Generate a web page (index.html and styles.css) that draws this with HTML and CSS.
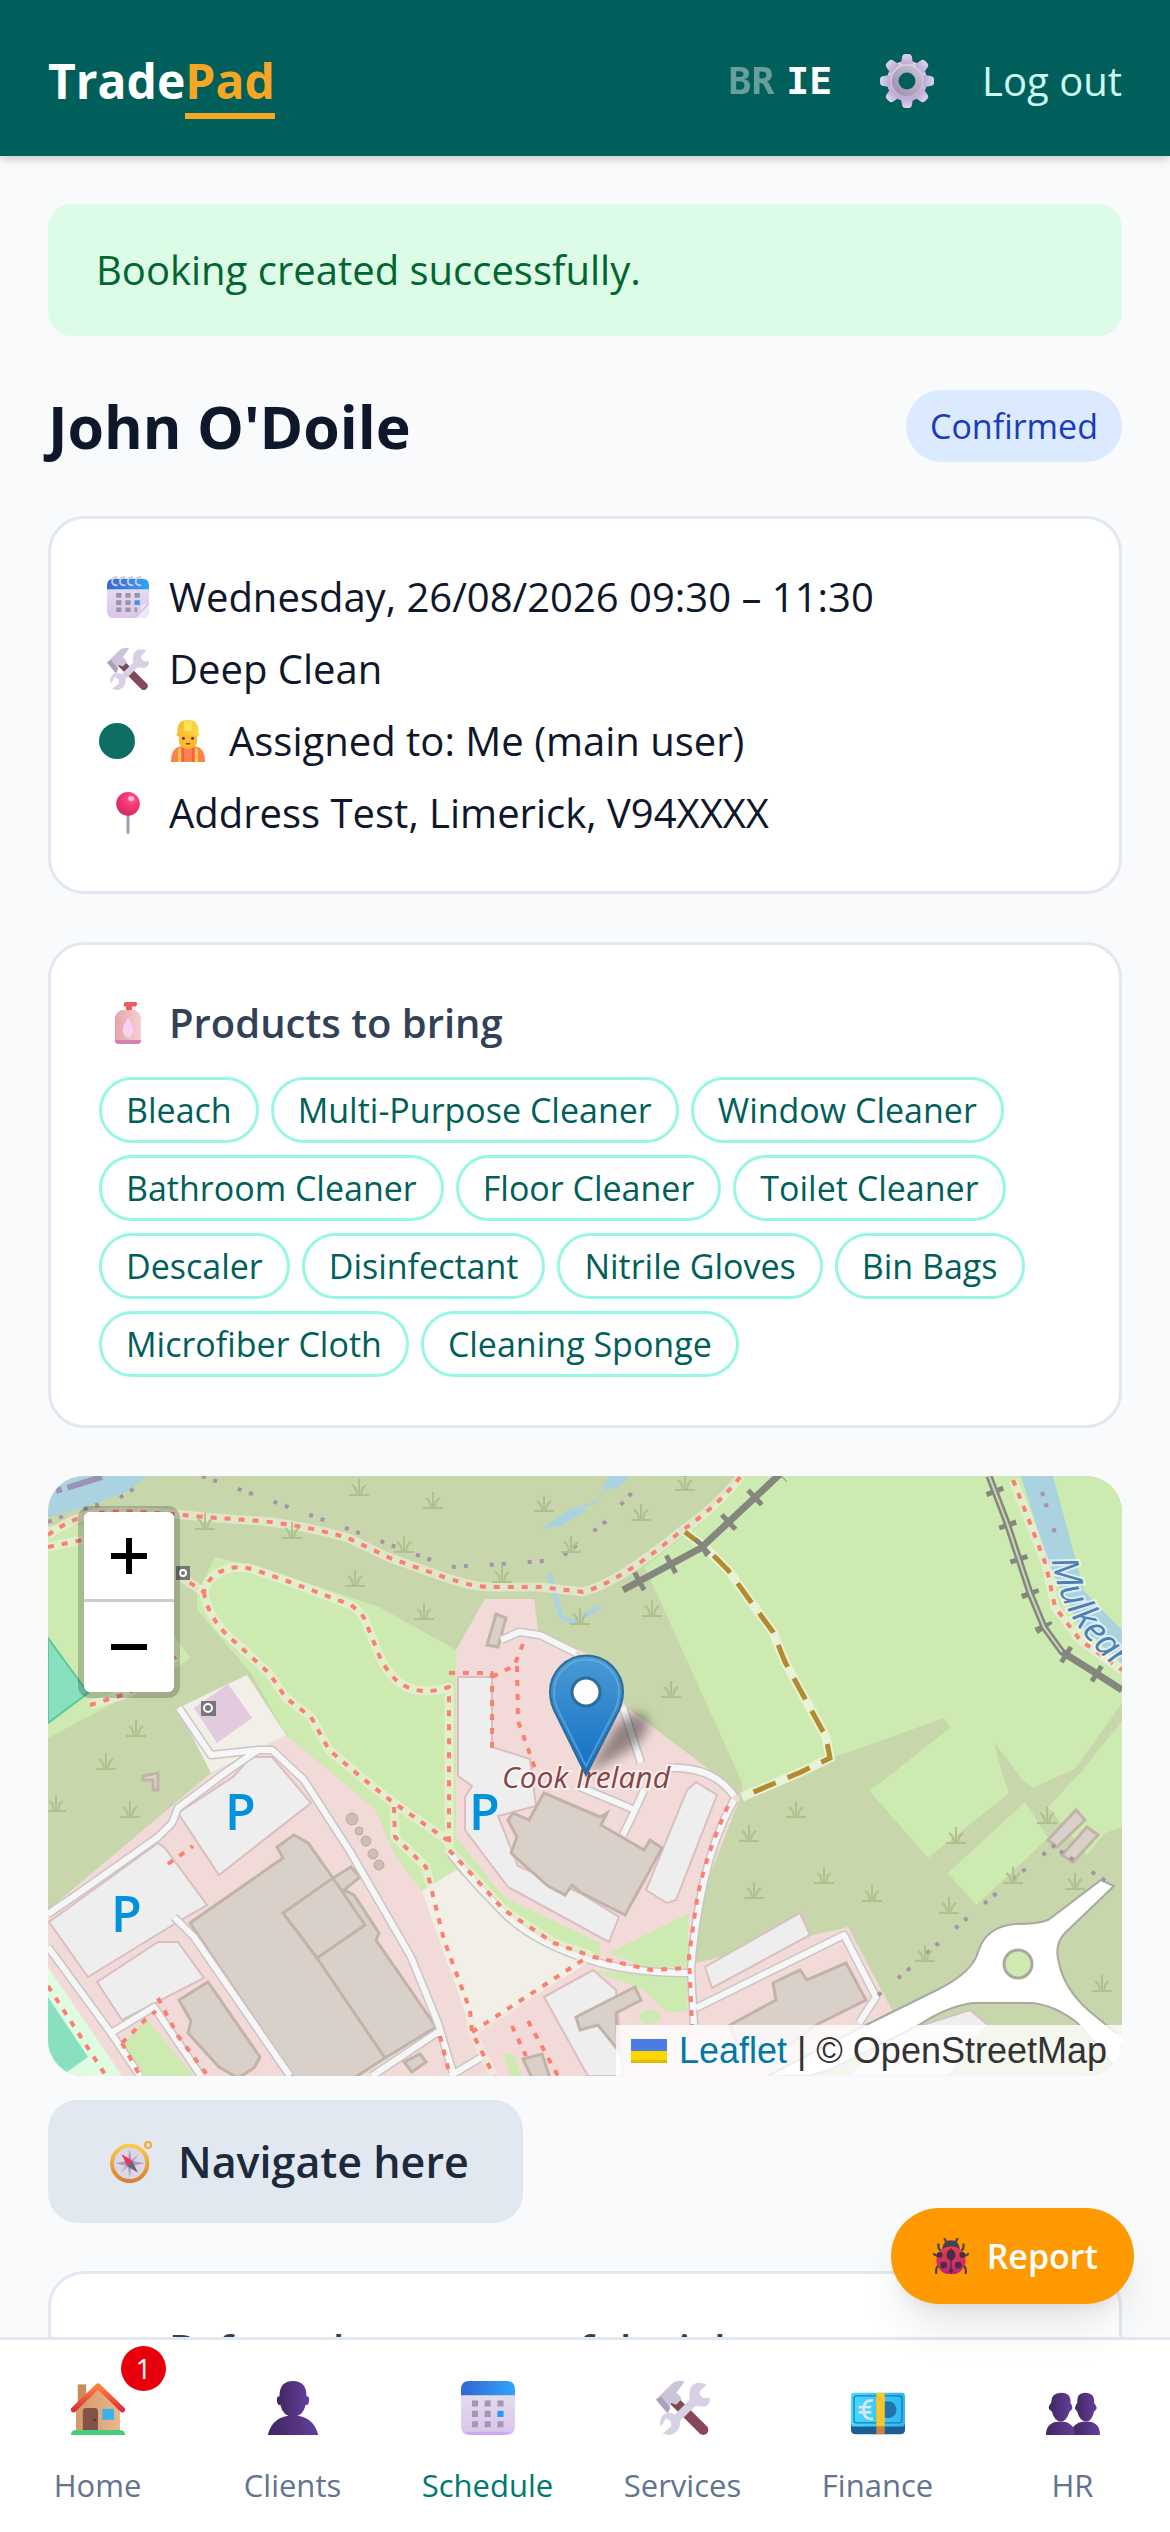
FILE: index.html
```html
<!DOCTYPE html>
<html lang="en">
<head>
    <meta charset="UTF-8">
    <meta name="viewport" content="width=device-width, initial-scale=1.0">
    <title>TradePad</title>
    <link rel="stylesheet" href="styles.css">
</head>
<body>

    <!-- Icon sprite -->
    <svg class="sprite" aria-hidden="true">
        <defs>
            <linearGradient id="gSilver" x1="0" y1="0" x2="0" y2="1"><stop offset="0" stop-color="#ddd5ea"/><stop offset="1" stop-color="#bda9d6"/></linearGradient>
            <linearGradient id="gRing" x1="1" y1="0" x2="0" y2="1"><stop offset="0" stop-color="#c6bdd0"/><stop offset="1" stop-color="#9f95ac"/></linearGradient>
            <linearGradient id="gBlue" x1="0" y1="0" x2="1" y2="0"><stop offset="0" stop-color="#3565d6"/><stop offset="1" stop-color="#32a2fb"/></linearGradient>
            <linearGradient id="gPage" x1="0" y1="0" x2="0" y2="1"><stop offset="0" stop-color="#e4dcf0"/><stop offset="1" stop-color="#d9c5ea"/></linearGradient>
            <linearGradient id="gWood" x1="0" y1="0" x2="1" y2="1"><stop offset="0" stop-color="#7b4b4b"/><stop offset="1" stop-color="#8a4560"/></linearGradient>
            <linearGradient id="gPerson" x1="0" y1="0" x2="1" y2="0"><stop offset="0" stop-color="#40265f"/><stop offset="1" stop-color="#643f9c"/></linearGradient>
            <linearGradient id="gHat" x1="0" y1="0" x2="1" y2="0"><stop offset="0" stop-color="#f5b82e"/><stop offset="1" stop-color="#fedb45"/></linearGradient>
            <radialGradient id="gPin" cx=".65" cy=".3" r=".8"><stop offset="0" stop-color="#ff5c8a"/><stop offset=".4" stop-color="#f73572"/><stop offset="1" stop-color="#c72c62"/></radialGradient>
            <linearGradient id="gBottle" x1="0" y1="0" x2="1" y2="0"><stop offset="0" stop-color="#e7a3a9"/><stop offset="1" stop-color="#f6d0d4"/></linearGradient>
            <linearGradient id="gWall" x1="0" y1="0" x2="1" y2="0"><stop offset="0" stop-color="#d59769"/><stop offset="1" stop-color="#e9b88d"/></linearGradient>
            <linearGradient id="gRoof" x1="0" y1="0" x2="0" y2="1"><stop offset="0" stop-color="#ff8140"/><stop offset="1" stop-color="#dc3039"/></linearGradient>
            <linearGradient id="gNote" x1="0" y1="0" x2="1" y2="0"><stop offset="0" stop-color="#47dbff"/><stop offset="1" stop-color="#2eb8f0"/></linearGradient>
            <linearGradient id="gBug" x1="0" y1="0" x2="0" y2="1"><stop offset="0" stop-color="#e8414f"/><stop offset="1" stop-color="#bd2276"/></linearGradient>
            <linearGradient id="gGold" x1="0" y1="0" x2="0" y2="1"><stop offset="0" stop-color="#fbcb42"/><stop offset="1" stop-color="#d8812f"/></linearGradient>
            <linearGradient id="gMarker" x1="0" y1="0" x2="0" y2="1"><stop offset="0" stop-color="#4a9bd3"/><stop offset="1" stop-color="#126fc6"/></linearGradient>
            <filter id="soft" x="-50%" y="-50%" width="200%" height="200%"><feGaussianBlur stdDeviation="6"/></filter>
        </defs>

        <symbol id="gear" viewBox="0 0 32 32">
            <g fill="url(#gSilver)">
                <circle cx="16" cy="16" r="12"/>
                <path id="tooth" d="M12.3 6 L13.2 1.4 Q13.5 0 15 0 H17 Q18.5 0 18.8 1.4 L19.7 6Z"/>
                <use href="#tooth" transform="rotate(45 16 16)"/><use href="#tooth" transform="rotate(90 16 16)"/>
                <use href="#tooth" transform="rotate(135 16 16)"/><use href="#tooth" transform="rotate(180 16 16)"/>
                <use href="#tooth" transform="rotate(225 16 16)"/><use href="#tooth" transform="rotate(270 16 16)"/>
                <use href="#tooth" transform="rotate(315 16 16)"/>
            </g>
            <circle cx="16" cy="16" r="7" fill="#005f5a" stroke="url(#gRing)" stroke-width="4"/>
        </symbol>

        <symbol id="spiral-calendar" viewBox="0 0 32 32">
            <path d="M0 9H32V27Q32 32 27 32H5Q0 32 0 27Z" fill="url(#gPage)"/>
            <path d="M0 10V7Q0 2 5 2H27Q32 2 32 7V10Z" fill="url(#gBlue)"/>
            <g fill="#9a93a6"><path d="M7 13h4v3.500h-4zM14 13h4v3.500h-4zM21 13h4v3.500h-4zM7 18.500h4v3.500h-4zM14 18.500h4v3.500h-4zM7 24h4v3.500h-4zM14 24h4v3.500h-4zM21 24h2v3.500h-2z"/></g>
            <path d="M21 18.500h4v3.500h-4z" fill="#3b8fe8"/>
            <path d="M32 21Q26 21 26 24Q26 27 21 32H27Q32 32 32 27Z" fill="#efe8f6"/><path d="M32 21L21 32" stroke="#cdbbe0" fill="none"/>
            <g fill="none" stroke="#cfc8d8" stroke-width="1.500"><path d="M8 7C2 8 3 0 8 1M14 7C8 8 9 0 14 1M20 7C14 8 15 0 20 1M26 7C20 8 21 0 26 1"/></g>
        </symbol>

        <symbol id="tools" viewBox="0 0 32 32">
            <path d="M11 12L28 29" stroke="url(#gWood)" stroke-width="6" stroke-linecap="round"/>
            <path d="M0 11L9 2Q11 0 13 0H16.500V1L12 7Q15 9 15 11L12 14L9 13L7 19L5.500 18Z" fill="#cbc3da"/>
            <path d="M0 11L7 19L8.500 16L3 9Z" fill="#aaa1b9"/>
            <path d="M30 2L26 6V8L28 10H32Q32 16 26 15Q24 14 22 16L14 24Q15 28 11 31Q8 33 4 31L9 27V24L6 22L3 27Q1 22 6 19Q8 18 11 20L20 11Q19 5 22 2Q25 0 30 2Z" fill="#d8d0e5"/>
        </symbol>

        <symbol id="worker" viewBox="0 0 32 32">
            <path d="M3 32Q3 20 12 20H20Q29 20 29 32Z" fill="#fb8150"/>
            <path d="M8.500 32V22l2.500-1V32zM23.500 32V22l-2.500-1V32z" fill="#fdd03b"/><path d="M11 21l2 0 0 11h-2zM19 21h2v11h-2z" fill="#fc5a50"/>
            <path d="M9 9H23V15Q23 22 16 22Q9 22 9 15Z" fill="#fdbb2d"/>
            <path d="M8 10Q7 0 16 0Q25 0 24 10L25 11Q24 13 22 12Q16 11 10 12Q8 13 7 11Z" fill="url(#gHat)"/>
            <path d="M13 .5h6v8h-6z" fill="#fde158"/>
            <circle cx="12.500" cy="14" r="1.100" fill="#4a2c2a"/><circle cx="19.500" cy="14" r="1.100" fill="#4a2c2a"/>
            <path d="M14 18q2-1 4 0q-2 1.500-4 0" fill="#6b2c2c"/>
        </symbol>

        <symbol id="pin" viewBox="0 0 32 32">
            <path d="M14.800 16h2.400v15q-1.200 2-2.400 0z" fill="#a99fb5"/>
            <circle cx="16" cy="9" r="9" fill="url(#gPin)"/><ellipse cx="18.500" cy="5" rx="2.300" ry="2" fill="#ffbcd0"/>
        </symbol>

        <symbol id="lotion" viewBox="0 0 32 32">
            <path d="M14 0H22Q24 1 22 3.500H19V6H14.500V3.500H13Q12 1 14 0Z" fill="#ef5a64"/>
            <path d="M11 6H21Q26 8 26 13V29Q26 32 23 32H9Q6 32 6 29V13Q6 8 11 6Z" fill="url(#gBottle)"/>
            <path d="M6 29H26Q26 32 23 32H9Q6 32 6 29Z" fill="#d580af"/>
            <path d="M16 12Q20 18 20 22.500Q19 27 16 27Q13 27 12 22.500Q12 18 16 12Z" fill="#f7d3f2"/>
        </symbol>

        <symbol id="compass" viewBox="0 0 32 32">
            <circle cx="29" cy="3" r="2.300" fill="none" stroke="#f3ad35" stroke-width="1.600"/>
            <circle cx="15" cy="17" r="13.500" fill="#ddd5e8" stroke="url(#gGold)" stroke-width="3"/>
            <path d="M15 6L16.500 15L26 17L16.500 19L15 28L13.500 19L4 17L13.500 15Z" fill="#a9a0b8"/>
            <path d="M8 10L15 15L22 10L17 17L22 24L15 19L8 24L13 17Z" fill="#b7afc4"/>
            <path d="M9 10L17 15L13 19Z" fill="#f0325a"/><path d="M21 24L17 15L13 19Z" fill="#6b6178"/>
        </symbol>

        <symbol id="ladybug" viewBox="0 0 32 32">
            <path d="M12 4L10 0M20 4L22 0M8 12Q4 10 5 5M24 12Q28 10 27 5M6 17L0 14M26 17L32 14M6 23Q2 26 3 32M26 23Q30 26 29 32" fill="none" stroke="#4c4252" stroke-width="2"/>
            <path d="M8 10Q9 2 16 2Q23 2 24 10Z" fill="#4b4054"/>
            <ellipse cx="16" cy="20" rx="13" ry="12.500" fill="url(#gBug)"/>
            <g fill="#4a2d42"><path d="M15.500 9h1v23h-1z"/><ellipse cx="16" cy="15" rx="4" ry="5"/><circle cx="6" cy="15" r="2.600"/><circle cx="26" cy="15" r="2.600"/><circle cx="9.500" cy="24" r="3"/><circle cx="22.500" cy="24" r="3"/><circle cx="16" cy="29" r="1.800"/></g>
        </symbol>

        <symbol id="house" viewBox="0 0 32 32">
            <path d="M4 2h5v12H4z" fill="#c78d5b"/>
            <path d="M3 16L16 4L29 16V30H3Z" fill="url(#gWall)"/>
            <path d="M1.500 17L16 3L30.500 17" fill="none" stroke="url(#gRoof)" stroke-width="3.200" stroke-linecap="round" stroke-linejoin="round"/>
            <path d="M7 30V18Q7 16 9 16H14Q16 16 16 18V30Z" fill="#835349"/><circle cx="14" cy="23" r=".9" fill="#5d3936"/>
            <path d="M18.500 16.500h7v6.500h-7z" fill="#38b3ee"/>
            <path d="M0 32Q0 29 3 29H29Q32 29 32 32Z" fill="#46cf7b"/>
        </symbol>

        <symbol id="bust" viewBox="0 0 32 32">
            <path d="M8 9Q8 0 16 0Q24 0 24 9Q26 9 25.500 12Q25 15 23.500 14Q22 21 16 21Q10 21 8.500 14Q7 15 6.500 12Q6 9 8 9Z" fill="url(#gPerson)"/>
            <path d="M1 32Q4 20.500 16 20.500Q28 20.500 31 32Z" fill="url(#gPerson)"/>
        </symbol>

        <symbol id="calendar" viewBox="0 0 32 32">
            <path d="M0 8H32V27Q32 32 27 32H5Q0 32 0 27Z" fill="url(#gPage)"/>
            <path d="M2 30Q4 32 7 32H25Q28 32 30 30Z" fill="#cfa8f0"/>
            <path d="M0 8.500V5Q0 0 5 0H27Q32 0 32 5V8.500Z" fill="url(#gBlue)"/>
            <path d="M6.500 11.500h3.600v3.600h-3.600zM14 11.500h3.600v3.600h-3.600zM21.600 11.500h3.600v3.600h-3.600zM6.500 17.700h3.600v3.600h-3.600zM14 17.700h3.600v3.600h-3.600zM6.500 23.800h3.600v3.600h-3.600zM14 23.800h3.600v3.600h-3.600zM21.600 23.800h3.600v3.600h-3.600z" fill="#a596b3"/>
            <path d="M21.600 17.700h3.600v3.600h-3.600z" fill="#2b95f8"/>
        </symbol>

        <symbol id="banknote" viewBox="0 0 32 32">
            <path d="M0 21H32V29Q32 31.500 29 31.500H3Q0 31.500 0 29Z" fill="#1b5f94"/>
            <rect y="7" width="32" height="20" rx="2" fill="url(#gNote)"/>
            <rect x="1.800" y="8.800" width="28.400" height="16" rx="1.500" fill="none" stroke="#1e79b5" stroke-width=".8"/>
            <circle cx="22" cy="17" r="5" fill="#2273ae"/>
            <path d="M13 11.500Q7.500 11 7.500 17Q7.500 23 13 22.500M4.500 15.500H12M4.500 18.500H12" fill="none" stroke="#d5e8ee" stroke-width="1.700"/>
            <path d="M15 7h5v20h-5z" fill="#ffc526"/><path d="M15 27h5v4.500h-5z" fill="#cf8242"/>
        </symbol>

        <symbol id="busts" viewBox="0 0 32 32">
            <g fill="url(#gPerson)">
                <path d="M18.500 13Q18 7 23 7Q29 7 28.500 13Q31.500 16 28.500 18Q27 24 24 24Q20 24 18.500 18Q16 16 18.500 13Z"/><path d="M15 32Q15 24 24 24Q32 24 32 32Z"/>
                <path d="M3 13Q3 7 9 7Q15 7 14.500 13Q17 16 14 18Q12 24 9 24Q5 24 3.500 18Q0 16 3 13Z"/><path d="M0 32Q0 24 8.500 24Q17 24 17 32Z"/>
            </g>
        </symbol>

        <symbol id="camera" viewBox="0 0 32 32">
            <path d="M2 13H30V30H2Z" fill="#5d5468"/><circle cx="16" cy="21" r="6" fill="#a9d3f5"/>
        </symbol>

        <symbol id="tuft" viewBox="-12 -20 24 22" overflow="visible">
            <path d="M-10 0H10M0 0V-16M-2 -1Q-3 -8 -7 -10M2 -1Q3 -8 7 -10" fill="none" stroke="#b1c18e" stroke-width="2"/>
        </symbol>
    </svg>

    <div class="app">
        <!-- Top bar -->
        <header class="topbar">
            <a class="logo" href="#">Trade<span>Pad</span></a>
            <div class="topbar-actions">
                <div class="langs">
                    <a class="lang" href="#">BR</a>
                    <a class="lang active" href="#">IE</a>
                </div>
                <a class="settings" href="#" aria-label="Settings"><svg class="icon-lg"><use href="#gear"/></svg></a>
                <button class="logout" type="button">Log out</button>
            </div>
        </header>

        <main class="content">
            <div class="alert" role="status">Booking created successfully.</div>

            <div class="title-row">
                <h1>John O'Doile</h1>
                <span class="status">Confirmed</span>
            </div>

            <!-- Booking details -->
            <section class="card details">
                <div class="row"><svg class="icon"><use href="#spiral-calendar"/></svg><span>Wednesday, 26/08/2026 09:30 – 11:30</span></div>
                <div class="row"><svg class="icon"><use href="#tools"/></svg><span>Deep Clean</span></div>
                <div class="row assigned"><span class="dot"></span><div class="row"><svg class="icon"><use href="#worker"/></svg><span>Assigned to: Me (main user)</span></div></div>
                <div class="row"><svg class="icon"><use href="#pin"/></svg><span>Address Test, Limerick, V94XXXX</span></div>
            </section>

            <!-- Products -->
            <section class="card">
                <h2 class="row"><svg class="icon"><use href="#lotion"/></svg><span>Products to bring</span></h2>
                <ul class="tags">
                    <li>Bleach</li>
                    <li>Multi-Purpose Cleaner</li>
                    <li>Window Cleaner</li>
                    <li>Bathroom Cleaner</li>
                    <li>Floor Cleaner</li>
                    <li>Toilet Cleaner</li>
                    <li>Descaler</li>
                    <li>Disinfectant</li>
                    <li>Nitrile Gloves</li>
                    <li>Bin Bags</li>
                    <li>Microfiber Cloth</li>
                    <li>Cleaning Sponge</li>
                </ul>
            </section>

            <!-- Map -->
            <div class="map">
                <svg class="map-canvas" viewBox="0 0 1074 600" preserveAspectRatio="xMidYMid slice">
                    <rect width="1074" height="600" fill="#c8d7ab"/>

                    <!-- grass -->
                    <g fill="#cdebb0">
                        <path d="M694 0L636 60L596 91L605 109L693 304L696 322L753 298L784 282L896 242L903 251L836 304L821 314L880 382L961 317L953 294L946 266L975 304L985 312L1028 292L1074 227V0Z"/>
                        <path d="M977 326L1000 362L928 429L900 397Z"/>
                        <path d="M1074 245L1032 297L1000 331L1039 379L1057 357L1074 351Z"/>
                        <path d="M0 50L60 48L110 70L120 150L142 182L110 205L60 230L0 262Z"/>
                    </g>
                    <path d="M0 162L40 217L0 247Z" fill="#88e0be" stroke="#5cc79c" stroke-width="2"/>

                    <!-- built-up area -->
                    <path d="M238 259L163 297L0 434V600H740L844 534L800 451L648 487L650 430L692 322L675 304L578 231L552 184L490 154L486 123H437L408 174V394L374 415L346 377L328 334L281 294Z" fill="#f2dad9"/>
                    <path d="M167 81L221 94L331 131L408 174V361L456 421L552 467V486L510 474L456 437L410 394L374 415L346 377L328 334L281 294L238 259L203 197L149 134V117Z" fill="#cdebb0"/>
                    <path d="M130 232L199 199L238 259L163 297Z" fill="#f2efe9"/>
                    <path d="M146 232L180 208L204 242L169 267Z" fill="#e2cbde"/>
                    <path d="M374 415L408 394L456 437L510 474L545 484L424 556Z" fill="#f2efe9"/>
                    <path d="M0 491L74 600H0Z" fill="#dffce2"/>
                    <path d="M0 521L40 581L19 596L0 590Z" fill="#88e0be"/>
                    <g fill="#cdebb0">
                        <path d="M74 567L99 544L146 600H92Z"/>
                        <path d="M561 477L641 437L639 491L596 491Z"/>
                        <path d="M543 494L639 501V536H619L596 514Z"/>
                        <ellipse cx="602" cy="541" rx="11" ry="7"/>
                        <path d="M455 578L466 578L474 600H463Z"/>
                    </g>

                    <!-- water -->
                    <g fill="#aad3df">
                        <path d="M0 0H99L78 16L38 31L0 41Z"/>
                        <path d="M973 0H1005L1027 81L1036 115L1074 154V187L1032 151L1007 101L998 81Z"/>
                        <path d="M560 0H582L570 12L556 14L550 26L532 34H540L512 50L492 54L520 34L550 24Z"/>
                    </g>
                    <path d="M501 97L513 141L524 146L552 131" fill="none" stroke="#aad3df" stroke-width="5"/>
                    <path d="M8 15L54 1" stroke="#9c92b5" stroke-width="6" stroke-dasharray="6 6 50"/>

                    <!-- car parks -->
                    <g fill="#eeeeee" stroke="#d9bfc0" stroke-width="2">
                        <path d="M130 337L185 301L203 281H224L263 327L171 399Z"/>
                        <path d="M1 446L110 367L117 372L159 429L128 447L40 501Z"/>
                        <path d="M49 506L110 466H130L156 502L74 544Z"/>
                        <path d="M410 201H444V271L482 283L488 330L450 340L470 390L532 417L571 441L561 466L460 411L417 354V321L424 310L410 300Z"/>
                        <path d="M648 306L669 319L628 424L619 427L598 414L639 314Z"/>
                        <path d="M657 491L752 437L762 459L664 512Z"/>
                        <path d="M496 521L545 494L568 514L575 600H540Z"/>
                        <path d="M840 560L922 534L940 549L900 600H800Z"/>
                    </g>

                    <!-- buildings -->
                    <g fill="#d9d0c9" stroke="#c2b3a8" stroke-width="3">
                        <path d="M496 317L552 341L559 337L553 349L596 374L602 364L614 372L577 439L532 416L524 409L517 419L500 410L463 377L469 361L460 344L465 337L481 344Z"/>
                        <path d="M246 359L260 367L285 402L303 391L312 401L296 414L306 419L331 457L328 464L388 551L337 582L306 602H246L142 447L235 382L229 371Z"/>
                        <path d="M285 402L235 437L269 482L317 449ZM269 482L337 582" fill="none"/>
                        <path d="M131 524L160 506L212 581L206 592L190 602L171 591L140 557L143 545Z"/>
                        <path d="M528 541L587 511L593 524L568 537L570 574L550 549L532 554Z"/>
                        <path d="M682 549L728 524L725 507L752 494L759 504L798 487L818 524L768 549L740 570H690Z"/>
                        <path d="M475 583L494 578L502 602H484ZM356 586L372 578L378 586L364 596Z"/>
                        <path d="M1028 334L1037 344L1009 371L1000 364ZM1039 351L1050 359L1025 386L1014 379ZM448 138L458 142L450 171L439 169ZM95 300L110 297V314H105V304H95Z"/>
                    </g>
                    <g fill="#cdbdb2" stroke="#bcaaa0">
                        <circle cx="304" cy="343" r="6"/><circle cx="311" cy="355" r="4"/><circle cx="318" cy="365" r="5"/><circle cx="325" cy="378" r="5"/><circle cx="331" cy="389" r="5"/>
                    </g>

                    <!-- roads: casing, then fill -->
                    <g fill="none" stroke-linejoin="round">
                        <path id="roads" stroke="#c9c5c5" stroke-width="9" d="M0 438L28 419L110 361L124 347L130 332L178 296L210 274H224L256 304L303 377L363 481L390 547L406 600M131 232L163 279L210 274M0 471L63 557L92 600M126 441L146 461L242 600M63 557L106 531L153 600M390 556L324 600M402 600L434 581M402 377Q424 405 456 437T552 487Q590 497 643 497M686 324Q666 360 656 405T643 494L646 549M453 164L471 156L492 159L528 177M575 231L593 287M621 292Q665 290 686 320M532 311L587 334L596 314M587 334L575 359M648 532L796 459L828 521L811 547"/>
                        <path stroke="#f7f6f6" stroke-width="6" d="M0 438L28 419L110 361L124 347L130 332L178 296L210 274H224L256 304L303 377L363 481L390 547L406 600M131 232L163 279L210 274M0 471L63 557L92 600M126 441L146 461L242 600M63 557L106 531L153 600M390 556L324 600M402 600L434 581M402 377Q424 405 456 437T552 487Q590 497 643 497M686 324Q666 360 656 405T643 494L646 549M453 164L471 156L492 159L528 177M575 231L593 287M621 292Q665 290 686 320M532 311L587 334L596 314M587 334L575 359M648 532L796 459L828 521L811 547"/>
                    </g>

                    <!-- roundabout -->
                    <path d="M720 600L818 549L889 514Q925 496 930 476Q938 450 968 448Q990 448 1000 444L1053 404L1066 410L1016 458Q1006 470 1011 487Q1016 512 1040 534L1074 562V600L1032 549Q1005 527 980 527H925Q900 530 871 549L782 594L760 600Z" fill="#fff" stroke="#a9a9a0" stroke-width="2"/>
                    <path d="M1030 546L1076 600V560Z" fill="#fff"/>
                    <circle cx="970" cy="488" r="14" fill="#cdebb0" stroke="#a9a9a0" stroke-width="3"/>

                    <!-- footpaths -->
                    <g fill="none" stroke-linejoin="round">
                        <g stroke="#f0f0e0" stroke-opacity=".6" stroke-width="9">
                            <path d="M0 59Q20 44 45 38T156 41L213 45Q260 50 300 62L342 82L396 101Q425 111 442 111H492L535 116Q570 107 632 56Q670 30 693 0M0 71L35 64M130 99L156 116Q160 100 176 94Q190 88 210 95L242 106L303 129Q315 138 317 144L331 179Q342 202 355 209Q374 220 401 211V374L417 391L456 434L506 467L546 481M156 116Q158 135 176 156L221 197L238 222L263 241L281 274L313 301L342 324L399 364M346 331L347 361L378 391L396 464L422 534L424 556L446 600M424 556L538 482M965 4L982 47L998 89L1007 131L1032 164L1074 194M42 229L81 217L128 181"/>
                        </g>
                        <g stroke="#fa8072" stroke-width="4" stroke-dasharray="6 8">
                            <path d="M0 59Q20 44 45 38T156 41L213 45Q260 50 300 62L342 82L396 101Q425 111 442 111H492L535 116Q570 107 632 56Q670 30 693 0M0 71L35 64M130 99L156 116Q160 100 176 94Q190 88 210 95L242 106L303 129Q315 138 317 144L331 179Q342 202 355 209Q374 220 401 211V374L417 391L456 434L506 467L546 481L603 494L639 492M156 116Q158 135 176 156L221 197L238 222L263 241L281 274L313 301L342 324L399 364M346 331L347 361L378 391L396 464L422 534L424 556L446 600M424 556L538 482M965 4L982 47L998 89L1007 131L1032 164L1074 194M42 229L81 217L128 181"/>
                            <path d="M401 197H444V280M469 190L470 245L488 295M475 168L466 190L444 201M680 330Q655 385 648 430L641 480L644 549M110 522L130 560L160 600M74 567L96 545L108 535M74 567L92 600M0 510L58 600M120 388L145 370M392 560L402 600M480 545L510 600M464 550L478 580"/>
                        </g>
                    </g>
                    <path d="M637 56L657 71L680 94L703 126L725 156L737 186L755 219L778 261L782 282L753 296L694 321" fill="none" stroke="#e8f2d6" stroke-width="9"/>
                    <path d="M637 56L657 71L680 94L703 126L725 156L737 186L755 219L778 261L782 282L753 296L694 321" fill="none" stroke="#b38a2e" stroke-width="5" stroke-dasharray="24 13"/>

                    <!-- railway -->
                    <g fill="none">
                        <path d="M575 114L653 72L732 -2M941 0L959 47L982 117L996 151L1014 176L1046 196L1074 214" stroke="#85877f" stroke-width="7"/>
                        <path d="M575 114L653 72L732 -2" stroke="#85877f" stroke-width="20" stroke-dasharray="5 31" stroke-dashoffset="-16"/>
                        <path d="M941 0L959 47L982 117L996 151L1014 176L1046 196L1074 214" stroke="#85877f" stroke-width="18" stroke-dasharray="5 31" stroke-dashoffset="-14"/>
                        <path d="M941 0L959 47L982 117L996 151L1014 176" stroke="#cdd8bb" stroke-width="2"/>
                    </g>

                    <!-- boundaries -->
                    <path d="M0 46L26 36L71 22L103 2M154 0L235 29L303 54L369 79L403 91L438 89L510 84L557 46L591 9M1007 369L964 404L911 449L868 487L828 521M1012 375L1050 400L1074 416M994 16L1008 60" fill="none" stroke="#a892a8" stroke-width="4" stroke-dasharray="4 8 4 22"/>

                    <!-- scrub marks -->
                    <g class="tufts"></g>

                    <g fill="#777"><path d="M128 90h14v14h-14zM153 225h15v15h-15z"/></g>
                    <g fill="none" stroke="#fff" stroke-width="2"><circle cx="135" cy="97" r="3"/><circle cx="160" cy="232" r="4"/></g>

                    <!-- labels -->
                    <g class="map-parking"><text x="177" y="354">P</text><text x="63" y="456">P</text><text x="421" y="354">P</text></g>
                    <text class="map-place" x="538" y="312">Cook Ireland</text>
                    <path id="riverLine" d="M1004 84C1010 120 1022 158 1090 210" fill="none"/>
                    <text class="map-river"><textPath href="#riverLine">Mulkear</textPath></text>

                    <!-- marker -->
                    <path d="M538 299L566 252Q582 232 598 240Q606 254 584 272Z" fill="#000" opacity=".4" filter="url(#soft)"/>
                    <path d="M538 299L509 240Q502 228 502 216A36 36 0 0 1 575 216Q575 228 568 240Z" fill="url(#gMarker)" stroke="#2e6c97" stroke-width="2"/>
                    <path d="M538 290L512 238Q506 228 506 216A32 32 0 0 1 571 216Q571 228 565 238Z" fill="none" stroke="#7db8e0" stroke-opacity=".5" stroke-width="2"/>
                    <circle cx="538" cy="216" r="14" fill="#fff" stroke="#2e6c97" stroke-width="3"/>
                </svg>

                <div class="zoom-control">
                    <button type="button" aria-label="Zoom in"><svg viewBox="0 0 36 36"><path d="M18 0V36M0 18H36"/></svg></button>
                    <button type="button" aria-label="Zoom out"><svg viewBox="0 0 36 36"><path d="M0 18H36"/></svg></button>
                </div>
                <div class="attribution">
                    <svg class="flag" viewBox="0 0 12 8"><path fill="#4C7BE1" d="M0 0h12v4H0z"/><path fill="#FFD500" d="M0 4h12v3H0z"/><path fill="#E0BC00" d="M0 7h12v1H0z"/></svg>
                    <span><a href="#">Leaflet</a> | © OpenStreetMap</span>
                </div>
            </div>

            <a class="navigate" href="#"><svg class="icon"><use href="#compass"/></svg><span>Navigate here</span></a>

            <!-- Photos -->
            <section class="card photos">
                <h2 class="row"><svg class="icon"><use href="#camera"/></svg><span>Before photos start of the job</span></h2>
            </section>
        </main>

        <button class="report" type="button"><svg class="icon-sm"><use href="#ladybug"/></svg><span>Report</span></button>

        <!-- Bottom navigation -->
        <nav class="tabbar">
            <a href="#"><svg class="icon-lg"><use href="#house"/></svg><span>Home</span><b class="badge">1</b></a>
            <a href="#"><svg class="icon-lg"><use href="#bust"/></svg><span>Clients</span></a>
            <a class="active" href="#"><svg class="icon-lg"><use href="#calendar"/></svg><span>Schedule</span></a>
            <a href="#"><svg class="icon-lg"><use href="#tools"/></svg><span>Services</span></a>
            <a href="#"><svg class="icon-lg"><use href="#banknote"/></svg><span>Finance</span></a>
            <a href="#"><svg class="icon-lg"><use href="#busts"/></svg><span>HR</span></a>
        </nav>
    </div>

    <script>
        // Scrub marks on the map: base point of each one
        const tufts = [
            [311, 19], [385, 32], [496, 35], [157, 53], [244, 62], [356, 76], [307, 110], [523, 76],
            [454, 106], [376, 143], [88, 260], [58, 293], [532, 148], [8, 335], [82, 341], [637, 14],
            [593, 44], [604, 140], [623, 221], [748, 341], [701, 365], [908, 367], [999, 347], [776, 407],
            [706, 422], [824, 425], [965, 407], [1027, 413], [901, 437], [877, 485], [1054, 515]
        ];
        document.querySelector('.tufts').innerHTML = tufts
            .map(([x, y]) => `<use href="#tuft" x="${x - 12}" y="${y - 20}" width="24" height="22"/>`)
            .join('');
    </script>
</body>
</html>
```
FILE: styles.css
```css
* {
    box-sizing: border-box;
}

body {
    margin: 0;
    font-family: "Open Sans", "Noto Sans", sans-serif;
    font-size: 40px;
    line-height: 60px;
    background-color: #f8fafc;
    color: #0f172b;
}

a {
    color: inherit;
    text-decoration: none;
}

button {
    font: inherit;
    border: none;
    cursor: pointer;
}

h1, h2, ul {
    margin: 0;
    padding: 0;
}

.sprite {
    position: absolute;
    width: 0;
    height: 0;
}

.app {
    position: relative;
    display: flex;
    flex-direction: column;
    height: 100vh;
}

/* Icons */
.icon {
    flex: none;
    width: 42px;
    height: 42px;
    margin: 0 8px;
}

.icon-lg {
    display: block;
    width: 54px;
    height: 54px;
}

.icon-sm {
    width: 36px;
    height: 36px;
}

/* Top bar */
.topbar {
    display: flex;
    justify-content: space-between;
    align-items: center;
    padding: 39px 48px 33px;
    background-color: #005f5a;
    box-shadow: 0 3px 9px rgba(0, 0, 0, 0.2);
    z-index: 1;
}

.logo {
    font-size: 48px;
    line-height: 84px;
    font-weight: 700;
    color: #fff;
}

.logo span {
    color: #f6a623;
    border-bottom: 6px solid #f6a623;
}

.topbar-actions {
    display: flex;
    align-items: center;
    gap: 48px;
}

.langs {
    display: flex;
    gap: 12px;
    font-family: "DejaVu Sans Mono", monospace;
    font-size: 38px;
    font-weight: 700;
}

.lang {
    color: #fff;
    opacity: 0.4;
}

.lang.active {
    opacity: 1;
}

.logout {
    padding: 0;
    background: none;
    color: #cbfbf1;
}

/* Page */
.content {
    flex: 1;
    min-height: 0;
    overflow-y: auto;
    scrollbar-width: none;
    padding: 48px;
}

.alert {
    padding: 36px 48px;
    margin-bottom: 48px;
    border-radius: 24px;
    background-color: #dcfce7;
    color: #016630;
}

.title-row {
    display: flex;
    justify-content: space-between;
    align-items: center;
    margin-bottom: 48px;
}

h1 {
    font-size: 59px;
    line-height: 84px;
    font-weight: 700;
}

.status {
    padding: 12px 24px;
    border-radius: 36px;
    background-color: #dbeafe;
    color: #193cb8;
    font-size: 34px;
    line-height: 48px;
}

.card {
    padding: 48px;
    margin-bottom: 48px;
    border: 3px solid #e2e8f0;
    border-radius: 36px;
    background-color: #fff;
}

.details {
    display: flex;
    flex-direction: column;
    gap: 12px;
}

.row {
    display: flex;
    align-items: center;
    gap: 12px;
}

.assigned {
    gap: 24px;
}

.dot {
    width: 36px;
    height: 36px;
    border-radius: 50%;
    background-color: #0f6e63;
}

h2 {
    font-size: 40px;
    font-weight: 600;
    color: #314158;
}

.photos h2 {
    line-height: 54px;
}

.tags {
    display: flex;
    flex-wrap: wrap;
    gap: 12px;
    margin-top: 24px;
    list-style: none;
}

.tags li {
    padding: 6px 24px;
    border: 3px solid #96f7e4;
    border-radius: 33px;
    color: #005f5a;
    font-size: 34px;
    line-height: 48px;
}

/* Map */
.map {
    position: relative;
    height: 600px;
    margin-bottom: 24px;
    border-radius: 36px;
    overflow: hidden;
}

.map-canvas {
    display: block;
    width: 100%;
    height: 100%;
}

.map-parking {
    font-size: 50px;
    font-weight: 600;
    fill: #0092da;
}

.map-place {
    font-size: 30px;
    font-style: italic;
    text-anchor: middle;
    fill: #844;
    stroke: rgba(255, 255, 255, 0.6);
    stroke-width: 4px;
    paint-order: stroke;
}

.map-river {
    font-size: 36px;
    font-style: italic;
    fill: #4d80b3;
    stroke: rgba(255, 255, 255, 0.6);
    stroke-width: 4px;
    paint-order: stroke;
}

.zoom-control {
    position: absolute;
    top: 30px;
    left: 30px;
    border: 6px solid rgba(0, 0, 0, 0.2);
    border-radius: 12px;
    background-clip: padding-box;
}

.zoom-control button {
    display: flex;
    align-items: center;
    justify-content: center;
    width: 90px;
    height: 90px;
    padding: 0;
    background-color: #fff;
}

.zoom-control button:first-child {
    border-bottom: 3px solid #ccc;
    border-radius: 6px 6px 0 0;
}

.zoom-control button:last-child {
    border-radius: 0 0 6px 6px;
}

.zoom-control svg {
    width: 36px;
    height: 36px;
    stroke: #000;
    stroke-width: 6;
}

.attribution {
    position: absolute;
    right: 0;
    bottom: 0;
    display: flex;
    align-items: center;
    gap: 12px;
    padding: 0 15px;
    background-color: rgba(255, 255, 255, 0.8);
    font-family: "Liberation Sans", Arial, sans-serif;
    font-size: 36px;
    line-height: 51px;
    color: #333;
}

.attribution a {
    color: #0078a8;
}

.flag {
    width: 36px;
    height: 24px;
}

.navigate {
    display: flex;
    align-items: center;
    gap: 18px;
    width: fit-content;
    padding: 30px 54px;
    margin-bottom: 48px;
    border-radius: 30px;
    background-color: #e2e8f0;
    color: #1d293d;
    font-size: 43px;
    line-height: 63px;
    font-weight: 600;
}

/* Report button */
.report {
    position: absolute;
    right: 36px;
    bottom: 228px;
    display: flex;
    align-items: center;
    gap: 18px;
    padding: 24px 36px 24px 42px;
    border-radius: 48px;
    background-color: #fe9a00;
    color: #fff;
    font-size: 34px;
    line-height: 48px;
    font-weight: 600;
    box-shadow: 0 30px 45px -9px rgba(0, 0, 0, 0.1), 0 12px 18px -12px rgba(0, 0, 0, 0.1);
    z-index: 2;
}

/* Bottom navigation */
.tabbar {
    display: grid;
    grid-template-columns: repeat(6, 1fr);
    padding: 41px 0 23px;
    border-top: 3px solid #e2e8f0;
    background-color: #fff;
}

.tabbar a {
    position: relative;
    display: flex;
    flex-direction: column;
    align-items: center;
    gap: 26px;
    color: #62748e;
    font-size: 31px;
    line-height: 48px;
}

.tabbar .active {
    color: #00786f;
}

.badge {
    position: absolute;
    top: -35px;
    left: 62%;
    width: 45px;
    height: 45px;
    border-radius: 50%;
    background-color: #e7000b;
    color: #fff;
    font-size: 28px;
    line-height: 45px;
    font-weight: 400;
    text-align: center;
}
```
